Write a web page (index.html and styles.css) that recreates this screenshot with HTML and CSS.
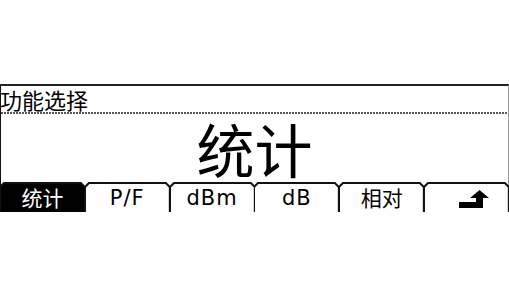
FILE: index.html
```html
<!DOCTYPE html>
<html lang="zh-CN">
<head>
  <meta charset="UTF-8" />
  <title>功能选择</title>
  <link rel="stylesheet" href="styles.css">
</head>
<body>
  <div class="screen">
    <div class="title-bar">功能选择</div>
    <div class="dots"></div>
    <div class="main-value">统计</div>

    <div class="softkeys">
      <div class="key key-active">
        <svg class="key-shape" viewBox="0 0 85 30" preserveAspectRatio="none"><path d="M0,31 V5 L4,1 H81 L85,5 V31" /></svg>
        <span class="key-label cjk">统计</span>
      </div>
      <div class="key">
        <svg class="key-shape" viewBox="0 0 85 30" preserveAspectRatio="none"><path d="M0,31 V5 L4,1 H81 L85,5 V31" /></svg>
        <span class="key-label">P/F</span>
      </div>
      <div class="key">
        <svg class="key-shape" viewBox="0 0 85 30" preserveAspectRatio="none"><path d="M0,31 V5 L4,1 H81 L85,5 V31" /></svg>
        <span class="key-label">dBm</span>
      </div>
      <div class="key">
        <svg class="key-shape" viewBox="0 0 85 30" preserveAspectRatio="none"><path d="M0,31 V5 L4,1 H81 L85,5 V31" /></svg>
        <span class="key-label">dB</span>
      </div>
      <div class="key">
        <svg class="key-shape" viewBox="0 0 85 30" preserveAspectRatio="none"><path d="M0,31 V5 L4,1 H81 L85,5 V31" /></svg>
        <span class="key-label cjk">相对</span>
      </div>
      <div class="key key-last">
        <svg class="key-shape" viewBox="0 0 85 30" preserveAspectRatio="none"><path d="M0,31 V5 L4,1 H81 L85,5 V31" /></svg>
        <svg class="back-icon" width="30" height="18" viewBox="0 0 30 18">
          <polygon points="0,12 17,12 17,8 11,8 20.5,0 30,8 24,8 24,18 0,18" />
        </svg>
      </div>
    </div>
  </div>
</body>
</html>
```

FILE: styles.css
```css
html, body {
  margin: 0;
  padding: 0;
  background: #fff;
  color: #000;
  font-family: "Noto Sans CJK SC", "DejaVu Sans", sans-serif;
}

.screen {
  margin-top: 84px;
  width: 507px;
  border-top: 2px solid #222;
  border-left: 1px solid #111;
  border-right: 1px solid #999;
  display: flex;
  flex-direction: column;
}

.title-bar {
  height: 26px;
  line-height: 26px;
  font-size: 22px;
  margin-left: -1px;
}

.dots {
  height: 2px;
  background: repeating-linear-gradient(90deg, #555 0 2px, transparent 2px 3px);
}

.main-value {
  height: 68px;
  display: flex;
  align-items: center;
  justify-content: center;
  font-size: 58px;
}

.softkeys {
  display: flex;
  height: 30px;
  margin-left: -1px;
  margin-right: -1px;
}

.key {
  flex: 1;
  position: relative;
  display: flex;
  align-items: center;
  justify-content: center;
}

.key-shape {
  position: absolute;
  left: 0;
  top: 0;
  width: 100%;
  height: 100%;
  fill: none;
  stroke: #111;
  stroke-width: 2;
}

.key-shape path {
  vector-effect: non-scaling-stroke;
}

.key-active .key-shape {
  fill: #000;
}

.key-label {
  position: relative;
  font-family: "DejaVu Sans", sans-serif;
  font-size: 21px;
  letter-spacing: 1px;
  line-height: 1;
  padding-top: 2px;
}

.key-label.cjk {
  font-family: "Noto Sans CJK SC", sans-serif;
  font-size: 21px;
  letter-spacing: 0;
  padding-top: 0;
}

.key-active .key-label {
  color: #fff;
}

.back-icon {
  position: relative;
  margin-left: 14px;
  margin-top: 3px;
  fill: #000;
}
```
